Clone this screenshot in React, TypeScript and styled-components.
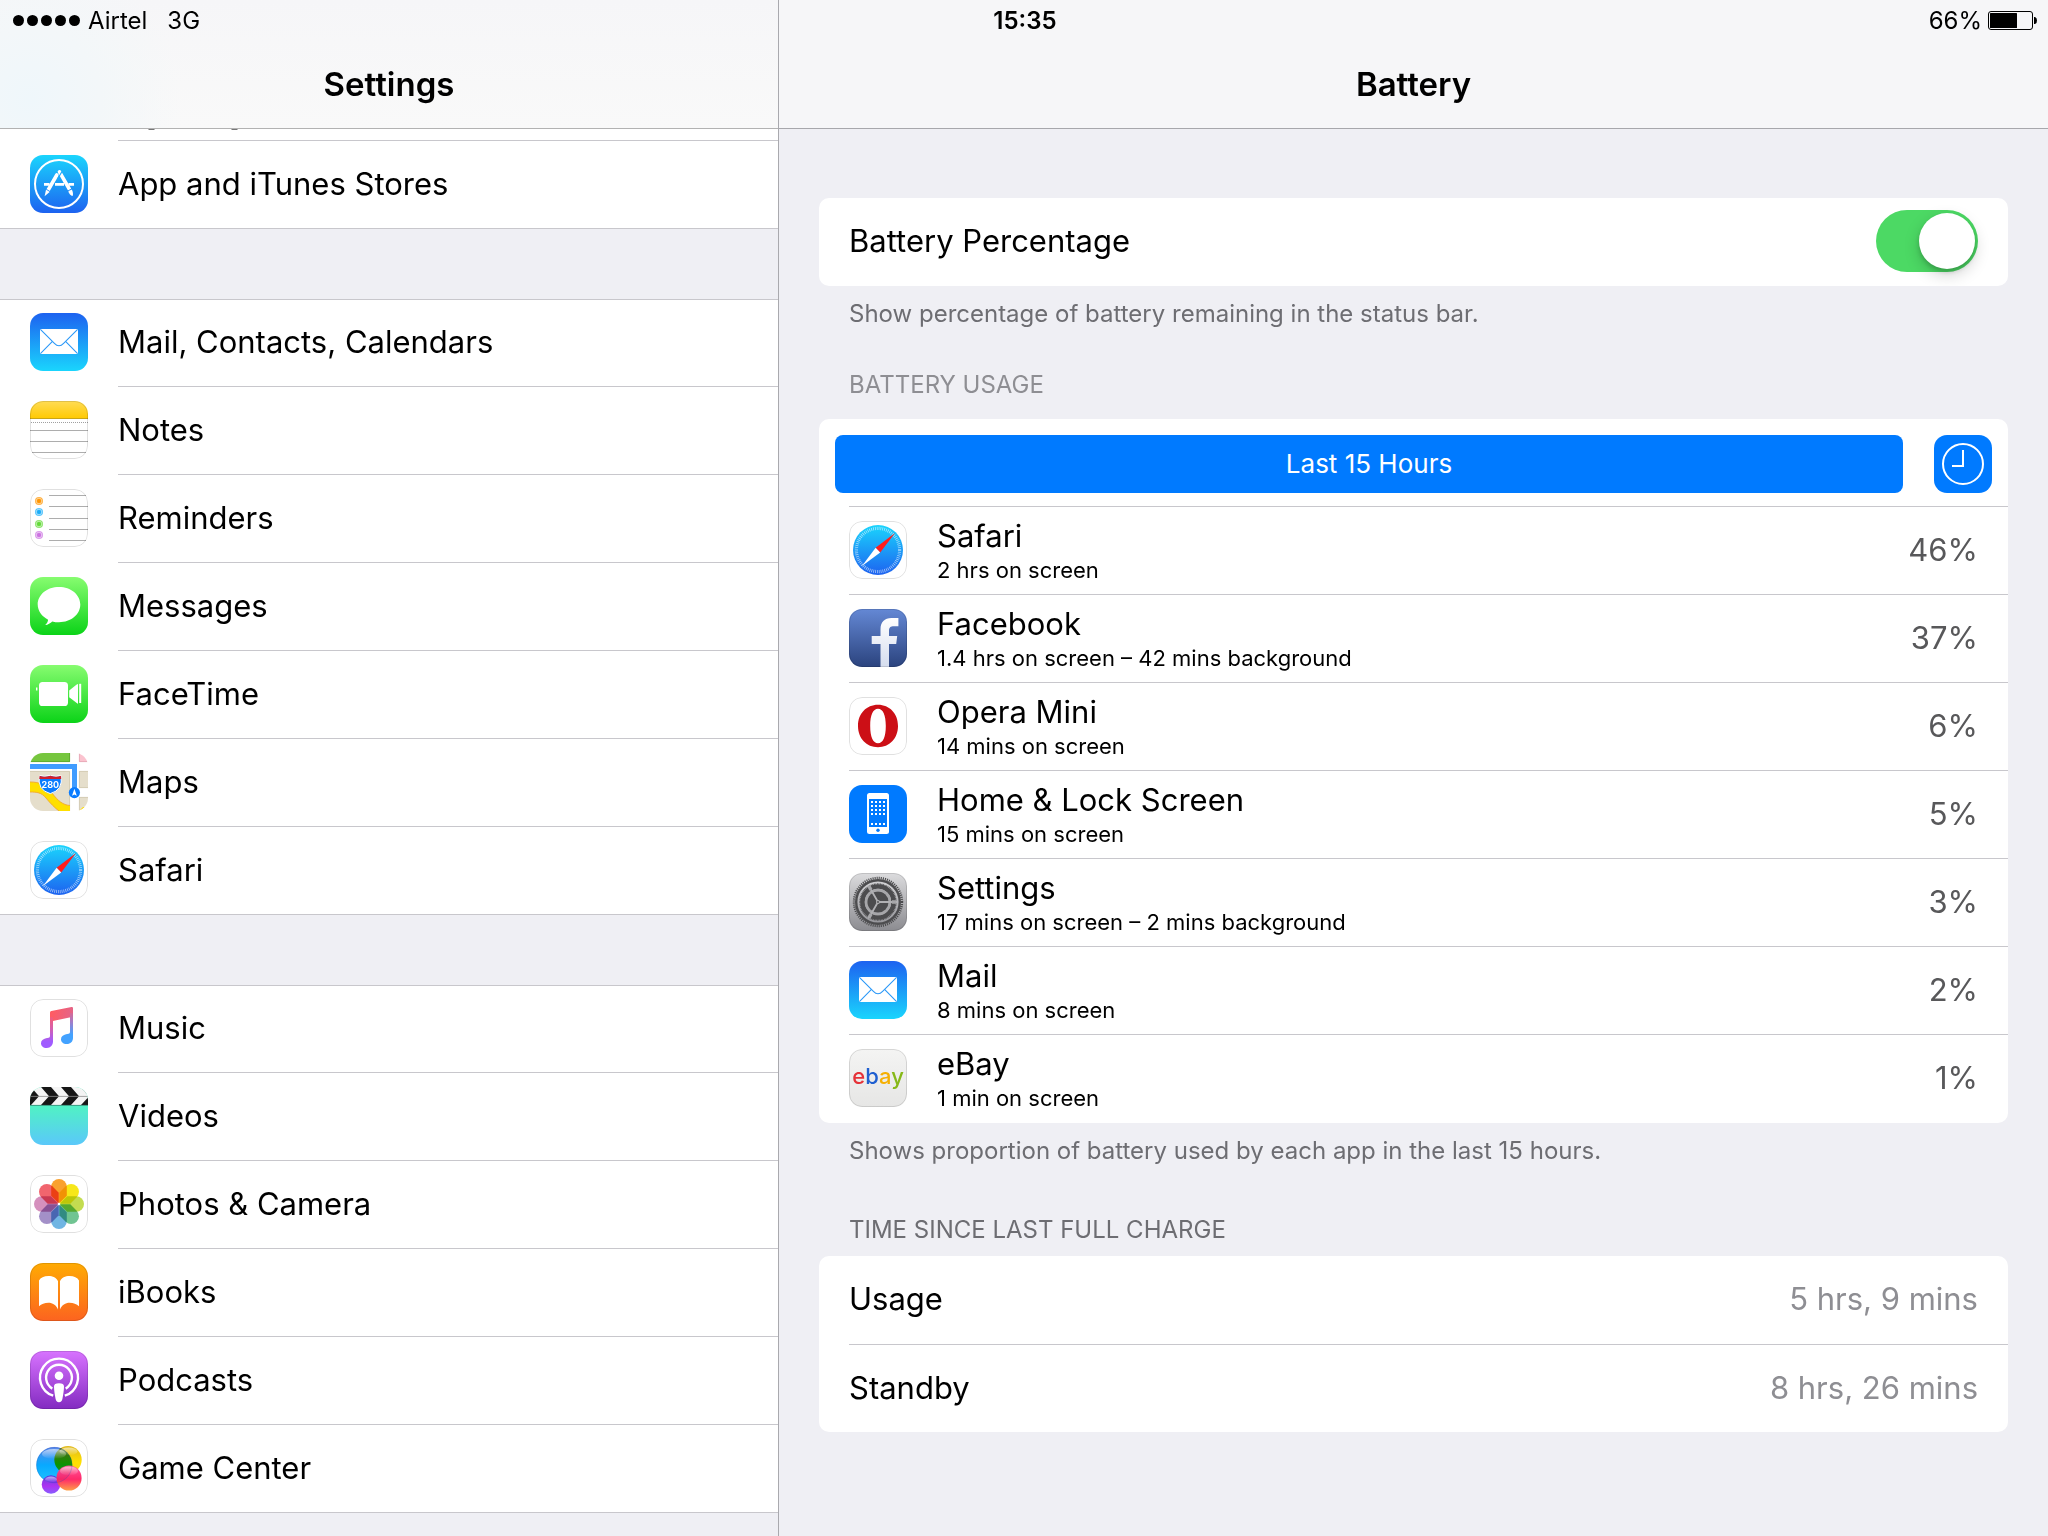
import React, { useState } from "react";
import styled, { createGlobalStyle } from "styled-components";

const color = {
  page: "#efeff4",
  card: "#ffffff",
  line: "#c8c7cc",
  blue: "#007aff",
  green: "#4cd964",
  note: "#6d6d72",
  value: "#8e8e93",
};

const GlobalStyle = createGlobalStyle`
  *, *::before, *::after { box-sizing: border-box; }
  body {
    margin: 0;
    background: ${color.page};
    color: #000;
    font-family: Inter, Roboto, "Liberation Sans", sans-serif;
    font-size: 31px;
    line-height: 40px;
  }
  button { font: inherit; border: 0; padding: 0; cursor: pointer; }
  ul, dl { list-style: none; margin: 0; padding: 0; }
  dt, dd, h1, h2, p { margin: 0; }
`;

/* ---------- Frame ---------- */

const Screen = styled.div`
  position: relative;
  display: flex;
  height: 100vh;
  min-height: 1100px;
  overflow: hidden;
`;

const StatusBar = styled.div`
  position: absolute;
  inset: 0 0 auto 0;
  z-index: 2;
  display: grid;
  grid-template-columns: 1fr auto 1fr;
  align-items: center;
  height: 41px;
  padding: 0 11px 0 13px;
  font-size: 24px;
  line-height: 41px;
`;

const Carrier = styled.div`
  display: flex;
  align-items: center;
  gap: 8px;
`;

const Network = styled.span`
  margin-left: 12px;
`;

const Signal = styled.span`
  display: flex;
  gap: 3px;
`;

const SignalDot = styled.i`
  width: 11px;
  height: 11px;
  border-radius: 50%;
  background: #000;
`;

const Clock = styled.time`
  font-weight: 600;
`;

const Charge = styled.div`
  display: flex;
  align-items: center;
  justify-content: flex-end;
  gap: 6px;
`;

const Sidebar = styled.aside`
  flex: 0 0 779px;
  border-right: 1px solid #a9a9ae;
`;

const Main = styled.main`
  flex: 1;
  min-width: 0;
`;

const TitleBar = styled.header<{ $tinted?: boolean }>`
  height: 129px;
  padding-top: 40px;
  border-bottom: 1px solid ${(p) => (p.$tinted ? "#b2b2b2" : "#a7a7ac")};
  background: ${(p) =>
    p.$tinted
      ? "radial-gradient(circle at 30px 100px, #eff7fb 0, #f3f7f9 70px, rgba(246,246,246,0) 150px), linear-gradient(#f6f6f8, #f9f9f9)"
      : "#f6f6f8"};
`;

const Title = styled.h1`
  font-size: 33px;
  font-weight: 600;
  line-height: 88px;
  text-align: center;
`;

/* ---------- Sidebar list ---------- */

const Strip = styled.div`
  background: ${color.card};
`;

const ScrolledRow = styled.div`
  height: 12px;
  margin-left: 118px;
  border-bottom: 1px solid ${color.line};
`;

const ScrolledText = styled.svg`
  display: block;
`;

const Group = styled.ul<{ $first?: boolean }>`
  margin-bottom: 70px;
  background: ${color.card};
  border-bottom: 1px solid ${color.line};
  box-shadow: ${(p) => (p.$first ? "none" : `inset 0 1px ${color.line}`)};
`;

const NavItem = styled.li`
  display: block;
  &:last-child a > span { border-bottom: 0; }
  &:last-child a { height: 87px; }
`;

const NavLink = styled.a`
  display: flex;
  gap: 30px;
  height: 88px;
  padding-left: 30px;
  color: inherit;
  text-decoration: none;
`;

const NavLabel = styled.span`
  flex: 1;
  padding-top: 23px;
  border-bottom: 1px solid ${color.line};
`;

/* ---------- App icons ---------- */

const Tile = styled.span<{ $fill?: string }>`
  flex: none;
  width: 58px;
  height: 58px;
  margin-top: 14px;
  border-radius: 13px;
  overflow: hidden;
  background: ${(p) => p.$fill || "#fff"};
`;

const Art = styled.svg`
  display: block;
  width: 58px;
  height: 58px;
`;

const HiddenDefs = styled.svg`
  position: absolute;
`;

/* ---------- Detail pane ---------- */

const Content = styled.div`
  padding: 69px 40px 40px;
`;

const Card = styled.section`
  border-radius: 10px;
  background: ${color.card};
  overflow: hidden;
`;

const Note = styled.p`
  padding: 12px 30px 0;
  color: ${color.note};
  font-size: 24px;
  line-height: 32px;
`;

const Heading = styled.h2<{ $light?: boolean }>`
  padding: ${(p) => (p.$light ? "39px 30px 18px" : "47px 30px 10px")};
  color: ${(p) => (p.$light ? color.value : color.note)};
  font-size: 24px;
  font-weight: 400;
  line-height: 32px;
  text-transform: uppercase;
`;

const SwitchRow = styled.label`
  display: flex;
  align-items: center;
  justify-content: space-between;
  height: 88px;
  padding: 0 30px 2px;
`;

const Switch = styled.input`
  appearance: none;
  display: flex;
  align-items: center;
  width: 102px;
  height: 62px;
  margin: 0;
  padding: 3px;
  border-radius: 31px;
  background: #e5e5ea;
  cursor: pointer;
  &::after {
    content: "";
    width: 56px;
    height: 56px;
    border-radius: 50%;
    background: #fff;
    box-shadow: 0 6px 16px rgba(0, 0, 0, 0.18), 0 3px 4px rgba(0, 0, 0, 0.16);
  }
  &:checked {
    justify-content: flex-end;
    background: ${color.green};
  }
`;

const RangeRow = styled.div`
  display: flex;
  gap: 31px;
  height: 87px;
  padding: 16px 16px 0;
`;

const RangeButton = styled.button`
  flex: 1;
  height: 58px;
  border-radius: 8px;
  background: ${color.blue};
  color: #fff;
  font-size: 26px;
`;

const ClockButton = styled.button`
  width: 58px;
  height: 58px;
  border-radius: 13px;
  background: ${color.blue};
`;

const UsageList = styled.ul`
  padding: 0 0 1px 30px;
`;

const UsageRow = styled.li`
  display: flex;
  height: 88px;
  padding-right: 30px;
  border-top: 1px solid ${color.line};
`;

const UsageText = styled.div`
  flex: 1;
  margin-left: 30px;
  padding-top: 9px;
`;

const UsageName = styled.div`
  line-height: 40px;
`;

const UsageDetail = styled.div`
  font-size: 22px;
  line-height: 28px;
`;

const Percent = styled.div`
  padding-top: 23px;
  color: #58585a;
`;

const Facts = styled.dl`
  padding-left: 30px;
`;

const Fact = styled.div`
  display: flex;
  justify-content: space-between;
  height: 88px;
  padding: 23px 30px 0 0;
  & + & { border-top: 1px solid ${color.line}; }
`;

const FactValue = styled.dd`
  color: ${color.value};
`;

/* ---------- Drawings ---------- */

const Outline = () => (
  <rect x=".5" y=".5" width="57" height="57" rx="12.5" fill="none" stroke="#000" strokeOpacity=".12" />
);

const SharedDefs = () => (
  <HiddenDefs width="0" height="0" aria-hidden="true">
    <defs>
      <linearGradient id="sky" x1="0" y1="0" x2="0" y2="1">
        <stop offset="0" stopColor="#1ad5fd" />
        <stop offset="1" stopColor="#1d62f0" />
      </linearGradient>
      <linearGradient id="noteTop" x1="0" y1="0" x2="0" y2="1">
        <stop offset="0" stopColor="#ffdc55" />
        <stop offset="1" stopColor="#ffc900" />
      </linearGradient>
      <linearGradient id="musicLeft" gradientUnits="userSpaceOnUse" x1="0" y1="14" x2="0" y2="46">
        <stop offset="0" stopColor="#ff5b63" />
        <stop offset=".45" stopColor="#d95fa8" />
        <stop offset=".9" stopColor="#a05bff" />
      </linearGradient>
      <linearGradient id="musicRight" gradientUnits="userSpaceOnUse" x1="0" y1="10" x2="0" y2="42">
        <stop offset="0" stopColor="#f0607c" />
        <stop offset=".4" stopColor="#a47cc8" />
        <stop offset=".8" stopColor="#43a2ff" />
      </linearGradient>
      <linearGradient id="musicBeam" gradientUnits="userSpaceOnUse" x1="22" y1="12" x2="43" y2="16">
        <stop offset="0" stopColor="#ff5b63" />
        <stop offset="1" stopColor="#e36489" />
      </linearGradient>
      <linearGradient id="ballBlue" x1="0" y1="0" x2="0" y2="1">
        <stop offset="0" stopColor="#5b86e8" />
        <stop offset=".5" stopColor="#08a9ff" />
        <stop offset="1" stopColor="#1fc4ff" />
      </linearGradient>
      <linearGradient id="ballYellow" x1="0" y1="0" x2="0" y2="1">
        <stop offset="0" stopColor="#dfb81e" />
        <stop offset=".6" stopColor="#ffe000" />
        <stop offset="1" stopColor="#ffd21f" />
      </linearGradient>
      <linearGradient id="ballPink" x1="0" y1="0" x2="0" y2="1">
        <stop offset="0" stopColor="#ff4f9a" />
        <stop offset=".55" stopColor="#ff1e62" />
        <stop offset="1" stopColor="#ff9a3c" />
      </linearGradient>
      <linearGradient id="ballPurple" x1="0" y1="0" x2="0" y2="1">
        <stop offset="0" stopColor="#5a2bd8" />
        <stop offset=".6" stopColor="#a51df0" />
        <stop offset="1" stopColor="#7a4dff" />
      </linearGradient>
      <linearGradient id="gloss" x1="0" y1="0" x2="0" y2="1">
        <stop offset="0" stopColor="#fff" stopOpacity=".6" />
        <stop offset="1" stopColor="#fff" stopOpacity="0" />
      </linearGradient>
      <linearGradient id="fLetter" x1="0" y1="0" x2="0" y2="1">
        <stop offset="0" stopColor="#fff" />
        <stop offset="1" stopColor="#d5ddee" />
      </linearGradient>
    </defs>
  </HiddenDefs>
);

const AppStoreArt = () => (
  <>
    <circle cx="29" cy="29" r="24" fill="none" stroke="#fff" strokeWidth="2" />
    <g stroke="#fff" fill="none">
      <path d="M14 29.3H19.5M25 29.3H34M38.5 29.3H44" strokeWidth="2.8" />
      <path d="M26.8 20L18.2 35" strokeWidth="3.6" strokeLinecap="round" />
      <path d="M29.5 16.8L39.3 34" strokeWidth="3.6" strokeLinecap="round" />
      <path d="M27.4 24.2L32 16.5" strokeWidth="1.2" stroke="#1ba9fb" />
    </g>
    <path d="M16 34.8L19.6 37L14.6 41.2Z" fill="#fff" />
    <path d="M38.2 36.4L41.8 34.4C43 37 43.4 39 42.6 41C40.6 40.4 39.2 38.6 38.2 36.4Z" fill="#fff" />
    <path d="M16.4 34.4L19.8 36.4M37.8 36L41.4 34" stroke="#1b86f6" strokeWidth=".9" />
  </>
);

const MailArt = () => (
  <>
    <rect x="10" y="16" width="38" height="25" rx=".8" fill="#fff" />
    <g fill="none" stroke="#2a98f8" strokeWidth="1.1">
      <path d="M10.4 16.4L24.4 30.4Q29 35.2 33.6 30.4L47.6 16.4" />
      <path d="M10.4 40.6L22.2 28.6M47.6 40.6L35.8 28.6" />
    </g>
  </>
);

const NotesArt = () => (
  <>
    <rect width="58" height="18" fill="url(#noteTop)" />
    <path d="M0 17.5H58" stroke="#c9a516" />
    <path d="M1 21.5H58" stroke="#a0a0a0" strokeDasharray="1 1" />
    <path d="M0 29.5H58M0 40.5H58M2 51.5H56" stroke="#adadad" />
    <Outline />
  </>
);

const bullets: [string, number][] = [
  ["#ff9500", 12],
  ["#1badf8", 23],
  ["#63da38", 35],
  ["#cc73e1", 46],
];

const RemindersArt = () => (
  <>
    <path d="M19 6.5H56M19 17.5H58M19 29.5H58M19 40.5H58M19 51.5H56" stroke="#adadad" />
    {bullets.map(([tint, y]) => (
      <g key={tint} fill={tint}>
        <circle cx="9" cy={y} r="4" fillOpacity=".75" />
        <circle cx="9" cy={y} r="2.8" fill="none" stroke="#fff" strokeOpacity=".6" strokeWidth=".7" />
        <circle cx="9" cy={y} r="2" />
      </g>
    ))}
    <Outline />
  </>
);

const MessagesArt = () => (
  <path
    fill="#fff"
    d="M29 10C41 10 50.3 17.8 50.3 27.6S41 45.3 29 45.3C26.6 45.3 24.4 45 22.3 44.4C20.3 46.2 18 47.7 15.2 48C17 46.4 18 44.4 18.1 42.7C11.8 39.6 7.7 34 7.7 27.6C7.7 17.8 17 10 29 10Z"
  />
);

const FaceTimeArt = () => (
  <g fill="#fff">
    <rect x="9" y="17" width="29" height="24" rx="3.6" />
    <path d="M6 22.4H7.4V25.6H6.6Q6 25.6 6 25Z" />
    <path d="M39.2 25.6L46.4 19.8Q48 18.6 48 19V38.6Q48 39 46.4 37.8L39.2 32.2Z" />
    <rect x="49.2" y="18.8" width="2" height="19.2" />
  </g>
);

const MapsArt = () => (
  <>
    <rect width="40" height="9" fill="#76c63e" />
    <path d="M0 8.6H39.6V0" fill="none" stroke="#5ba52c" strokeWidth=".8" />
    <rect x="49" width="9" height="9" fill="#fbc3cf" />
    <path d="M49.4 0V8.6H58" fill="none" stroke="#e2a4b2" strokeWidth=".8" />
    <rect y="18" width="40" height="40" fill="#e5decb" />
    <rect x="49" y="18" width="9" height="17" fill="#e5decb" />
    <rect x="49" y="44" width="9" height="14" fill="#e5decb" />
    <path d="M0 18.4H39.6V58M58 18.4H49.4V34.6H58M58 44.4H49.4V58" fill="none" stroke="#cfc6ae" strokeWidth=".8" />
    <path d="M0 29C10 29 16 32 22 40C28 48 33 52 40 52.5V58H29C25 55 20 50 16 45C11.5 39.5 7 39 0 39Z" fill="#ffdf00" />
    <path d="M0 29C10 29 16 32 22 40C28 48 33 52 40 52.5M29 58C25 55 20 50 16 45C11.5 39.5 7 39 0 39" fill="none" stroke="#f0a830" strokeWidth=".9" />
    <path d="M49 58L53 54H58V58Z" fill="#ffdf00" />
    <path d="M0 13.5H44.5V36" fill="none" stroke="#409cff" strokeWidth="5" />
    <circle cx="44.4" cy="39.6" r="5.6" fill="#0a7cff" />
    <path d="M44.4 35.8L46.8 42.8L44.4 41.4L42 42.8Z" fill="#fff" />
    <path d="M9.5 22.4Q14 24.4 20.3 22.4Q26.5 24.4 31 22.4Q33.6 37 20.3 40.6Q6.8 37 9.5 22.4Z" fill="#0a7cff" stroke="#fff" strokeWidth="1" />
    <path d="M9.6 22.8Q14 24.8 20.3 22.8Q26.5 24.8 31 22.8L31.2 26H9.2Z" fill="#d0202e" />
    <text x="20.3" y="34.8" fontSize="9" fontWeight="700" fill="#fff" textAnchor="middle">280</text>
  </>
);

const SafariArt = () => (
  <>
    <circle cx="29" cy="29" r="25" fill="url(#sky)" />
    <circle cx="29" cy="29" r="21.6" fill="none" stroke="#fff" strokeOpacity=".6" strokeWidth="3.2" strokeDasharray=".8 1.085" />
    <path d="M46 12L26.6 26.8L31.2 31.4Z" fill="#ff1d1d" />
    <path d="M13 45L26.6 26.8L31.2 31.4Z" fill="#fff" />
    <Outline />
  </>
);

const MusicArt = () => (
  <>
    <path d="M20 13.6Q20 12.3 21.4 12L41.5 8Q43 7.8 43 9V17.8L22.8 22L20 26Z" fill="url(#musicBeam)" />
    <path d="M20 18H23V42.5C23 46 20.6 49 16.8 49C13 49 11 46.8 11 44.2C11 41.4 13.2 39.8 16 39.2L18.6 38.8Q20 38.5 20 37Z" fill="url(#musicLeft)" />
    <path d="M40 14H43V39C43 42.4 40.6 45 36.8 45C33 45 31 42.8 31 40.2C31 37.4 33.2 35.8 36 35.2L38.6 34.8Q40 34.5 40 33Z" fill="url(#musicRight)" />
    <Outline />
  </>
);

const VideosArt = () => (
  <>
    <rect width="58" height="18" fill="#f4f4f4" />
    <g fill="#161616">
      <path d="M-9 0H1L9 9.2L1 18H-9Z" />
      <path d="M11 0H21L29 9.2L21 18H11L19 9.2Z" />
      <path d="M31 0H41L49 9.2L41 18H31L39 9.2Z" />
      <path d="M51 18L58 10.4V18Z" />
    </g>
    <path d="M0 9.4H58" stroke="#8b8b8b" strokeWidth=".8" />
    <path d="M0 18.4H58" stroke="#3a8f7c" strokeWidth=".9" />
    <path d="M52 2Q55 4 56.5 7" fill="none" stroke="#bbb" strokeWidth=".6" />
  </>
);

const petals = ["#f9a12e", "#f7e71a", "#c3dc50", "#70c492", "#70b5e3", "#a390c8", "#d590bd", "#f1656e"];

const Blend = styled.g`
  isolation: isolate;
`;

const Petal = styled.path`
  mix-blend-mode: multiply;
`;

const Overlap = styled.circle`
  mix-blend-mode: multiply;
`;

const PhotosArt = () => (
  <>
    <Blend>
      {petals.map((tint, i) => (
        <Petal
          key={tint}
          d="M-7.8 -17.2A7.8 7.8 0 0 1 7.8 -17.2V-8.2L0 -.4L-7.8 -8.2Z"
          fill={tint}
          transform={`translate(29 29) rotate(${i * 45})`}
        />
      ))}
    </Blend>
    <circle cx="29" cy="29" r="1.3" fill="#fff" />
    <Outline />
  </>
);

const BooksArt = () => (
  <>
    <g fill="#fff">
      <path d="M9 17.4C10.5 14.6 14 13 18.4 13S26.6 14.8 28 18.2V46.4C26 42 22.6 39.8 18.4 39.8C14.6 39.8 11.4 41 9 43.2Z" />
      <path d="M49 17.4C47.5 14.6 44 13 39.6 13S31.4 14.8 30 18.2V46.4C32 42 35.4 39.8 39.6 39.8C43.4 39.8 46.6 41 49 43.2Z" />
    </g>
    <Outline />
  </>
);

const PodcastsArt = () => (
  <>
    <g fill="none" stroke="#fff" strokeWidth="2.4">
      <path d="M23.2 44.7A19 19 0 1 1 34.8 44.7" />
      <path d="M22.3 37.6A12.9 12.9 0 1 1 35.7 37.6" />
    </g>
    <circle cx="29" cy="24.8" r="4.3" fill="#fff" />
    <path
      d="M29 32.2C32.4 32.2 34 33.2 34 35.6C34 39 33.2 44 32.5 47.5C32 50.2 31 51.2 29 51.2S26 50.2 25.5 47.5C24.8 44 24 39 24 35.6C24 33.2 25.6 32.2 29 32.2Z"
      fill="#fff"
    />
    <Outline />
  </>
);

const GameCenterArt = () => (
  <>
    <Blend>
      <circle cx="24.3" cy="26" r="18" fill="url(#ballBlue)" />
      <Overlap cx="38" cy="20.7" r="13.7" fill="url(#ballYellow)" />
      <circle cx="21" cy="45.5" r="9.3" fill="url(#ballPurple)" fillOpacity=".9" />
      <circle cx="39" cy="39" r="12.6" fill="url(#ballPink)" fillOpacity=".95" />
    </Blend>
    <ellipse cx="24" cy="15" rx="12" ry="5" fill="url(#gloss)" />
    <ellipse cx="38.5" cy="12.5" rx="9" ry="4" fill="url(#gloss)" />
    <ellipse cx="39" cy="32" rx="9" ry="4.5" fill="url(#gloss)" />
    <ellipse cx="21" cy="40.5" rx="6" ry="3" fill="url(#gloss)" />
    <circle cx="24.3" cy="26" r="17.7" fill="none" stroke="#2c4fb8" strokeOpacity=".4" strokeWidth=".6" />
    <Outline />
  </>
);

const FacebookArt = () => (
  <>
    <path
      d="M31.5 58V35H22.7V27H31.5V20.5C31.5 13 35.5 9 42.5 9H49.4V17.2H45C41.4 17.2 40 18.6 40 21.8V27H48.2L47.2 35H40V58Z"
      fill="url(#fLetter)"
    />
    <Outline />
  </>
);

const OperaArt = () => (
  <>
    <path
      fillRule="evenodd"
      fill="#cc0f16"
      d="M29 7.8C40.5 7.8 49 16.5 49 29S40.5 50.2 29 50.2S9 41.5 9 29S17.5 7.8 29 7.8ZM29 11.8C24 11.8 21.2 18 21.2 29S24 46.2 29 46.2S36.8 40 36.8 29S34 11.8 29 11.8Z"
    />
    <Outline />
  </>
);

const HomeArt = () => (
  <>
    <rect x="18" y="8" width="22" height="41" rx="2.5" fill="#fff" />
    <rect x="20" y="14" width="18" height="28" fill={color.blue} />
    {[16, 20, 24, 28, 38].map((y) =>
      [22, 26, 30, 34].map((x) => <rect key={`${x}-${y}`} x={x} y={y} width="2" height="2" fill="#fff" />)
    )}
    <circle cx="29" cy="45.3" r="1.7" fill={color.blue} />
  </>
);

const SettingsArt = () => (
  <>
    <circle cx="29" cy="29" r="24" fill="none" stroke="#4c4c4e" strokeWidth="2.4" strokeDasharray="1.1 .994" />
    <circle cx="29" cy="29" r="21.8" fill="none" stroke="#4c4c4e" strokeWidth="2.4" />
    <circle cx="29" cy="29" r="15.5" fill="none" stroke="#4c4c4e" strokeWidth="4.6" />
    <circle cx="29" cy="29" r="18" fill="none" stroke="#4c4c4e" strokeWidth="1.4" strokeDasharray=".9 .67" />
    <circle cx="29" cy="29" r="12" fill="none" stroke="#a6a6a9" strokeWidth="2.6" />
    <circle cx="29" cy="29" r="10.6" fill="#4c4c4e" />
    <path d="M29 29H48M29 29L19.5 12.5M29 29L19.5 45.5" stroke="#b0b0b3" strokeWidth="1.8" />
    <path d="M43 29H47M22 16.9L20 13.4M22 41.1L20 44.6" stroke="#a6a6a9" strokeWidth="3.4" />
    <circle cx="29" cy="29" r="2" fill="#b0b0b3" />
    <circle cx="29" cy="29" r=".9" fill="#4c4c4e" />
    <Outline />
  </>
);

const EbayArt = () => (
  <>
    <text x="29" y="35" fontSize="22" fontWeight="500" textAnchor="middle">
      <tspan fill="#e53238">e</tspan>
      <tspan fill="#1f5fd0">b</tspan>
      <tspan fill="#f5af02">a</tspan>
      <tspan fill="#86b817">y</tspan>
    </text>
    <Outline />
  </>
);

type IconName =
  | "appstore" | "mail" | "notes" | "reminders" | "messages" | "facetime" | "maps" | "safari"
  | "music" | "videos" | "photos" | "ibooks" | "podcasts" | "gamecenter"
  | "facebook" | "opera" | "home" | "settings" | "ebay";

const icons: Record<IconName, { art: () => React.ReactElement; fill?: string }> = {
  appstore: { art: AppStoreArt, fill: "linear-gradient(#1ad5fd, #1d62f0)" },
  mail: { art: MailArt, fill: "linear-gradient(#1d62f0, #1ad5fd)" },
  notes: { art: NotesArt },
  reminders: { art: RemindersArt },
  messages: { art: MessagesArt, fill: "linear-gradient(#87fc70, #0bd318)" },
  facetime: { art: FaceTimeArt, fill: "linear-gradient(#87fc70, #0bd318)" },
  maps: { art: MapsArt },
  safari: { art: SafariArt },
  music: { art: MusicArt },
  videos: { art: VideosArt, fill: "linear-gradient(#50f3c2 30%, #5ac8fa)" },
  photos: { art: PhotosArt },
  ibooks: { art: BooksArt, fill: "linear-gradient(#ffab03, #fc6320)" },
  podcasts: { art: PodcastsArt, fill: "linear-gradient(#d873ff, #832bc1)" },
  gamecenter: { art: GameCenterArt },
  facebook: { art: FacebookArt, fill: "linear-gradient(#6488d5, #2b437e)" },
  opera: { art: OperaArt },
  home: { art: HomeArt, fill: color.blue },
  settings: { art: SettingsArt, fill: "linear-gradient(#dcdcde, #8b8b90)" },
  ebay: { art: EbayArt, fill: "linear-gradient(#f4f4f3, #e6e6e5)" },
};

const AppIcon = ({ name }: { name: IconName }) => {
  const { art: Drawing, fill } = icons[name];
  return (
    <Tile $fill={fill} aria-hidden="true">
      <Art viewBox="0 0 58 58">
        <Drawing />
      </Art>
    </Tile>
  );
};

/* ---------- Data ---------- */

const groups: { icon: IconName; label: string }[][] = [
  [{ icon: "appstore", label: "App and iTunes Stores" }],
  [
    { icon: "mail", label: "Mail, Contacts, Calendars" },
    { icon: "notes", label: "Notes" },
    { icon: "reminders", label: "Reminders" },
    { icon: "messages", label: "Messages" },
    { icon: "facetime", label: "FaceTime" },
    { icon: "maps", label: "Maps" },
    { icon: "safari", label: "Safari" },
  ],
  [
    { icon: "music", label: "Music" },
    { icon: "videos", label: "Videos" },
    { icon: "photos", label: "Photos & Camera" },
    { icon: "ibooks", label: "iBooks" },
    { icon: "podcasts", label: "Podcasts" },
    { icon: "gamecenter", label: "Game Center" },
  ],
];

const usage: { icon: IconName; name: string; detail: string; percent: number }[] = [
  { icon: "safari", name: "Safari", detail: "2 hrs on screen", percent: 46 },
  { icon: "facebook", name: "Facebook", detail: "1.4 hrs on screen – 42 mins background", percent: 37 },
  { icon: "opera", name: "Opera Mini", detail: "14 mins on screen", percent: 6 },
  { icon: "home", name: "Home & Lock Screen", detail: "15 mins on screen", percent: 5 },
  { icon: "settings", name: "Settings", detail: "17 mins on screen – 2 mins background", percent: 3 },
  { icon: "mail", name: "Mail", detail: "8 mins on screen", percent: 2 },
  { icon: "ebay", name: "eBay", detail: "1 min on screen", percent: 1 },
];

const facts = [
  { label: "Usage", value: "5 hrs, 9 mins" },
  { label: "Standby", value: "8 hrs, 26 mins" },
];

/* ---------- Page ---------- */

export default function App() {
  const [showPercent, setShowPercent] = useState(true);

  return (
    <>
      <GlobalStyle />
      <SharedDefs />
      <Screen>
        <StatusBar>
          <Carrier>
            <Signal>
              {[0, 1, 2, 3, 4].map((i) => (
                <SignalDot key={i} />
              ))}
            </Signal>
            <span>Airtel</span>
            <Network>3G</Network>
          </Carrier>
          <Clock>15:35</Clock>
          <Charge>
            {showPercent && <span>66%</span>}
            <svg width="49" height="19" viewBox="0 0 49 19" aria-hidden="true">
              <rect x=".5" y=".5" width="44" height="18" rx="2.5" fill="none" stroke="#000" />
              <rect x="2" y="2" width="27" height="15" rx=".5" />
              <path d="M46 6H47Q49 6.5 49 9.5T47 13H46Z" />
            </svg>
          </Charge>
        </StatusBar>

        <Sidebar>
          <TitleBar $tinted>
            <Title>Settings</Title>
          </TitleBar>
          <Strip>
            <ScrolledRow>
              <ScrolledText width="130" height="1" viewBox="0 0 130 1" aria-hidden="true">
                <path d="M30 0H37L36 1H31ZM113 0H120L119 1H114Z" fill="#777" />
              </ScrolledText>
            </ScrolledRow>
          </Strip>
          <nav>
            {groups.map((items, i) => (
              <Group key={i} $first={i === 0}>
                {items.map((item) => (
                  <NavItem key={item.label}>
                    <NavLink href="#">
                      <AppIcon name={item.icon} />
                      <NavLabel>{item.label}</NavLabel>
                    </NavLink>
                  </NavItem>
                ))}
              </Group>
            ))}
          </nav>
        </Sidebar>

        <Main>
          <TitleBar>
            <Title>Battery</Title>
          </TitleBar>
          <Content>
            <Card>
              <SwitchRow>
                Battery Percentage
                <Switch
                  type="checkbox"
                  role="switch"
                  checked={showPercent}
                  onChange={(e) => setShowPercent(e.target.checked)}
                />
              </SwitchRow>
            </Card>
            <Note>Show percentage of battery remaining in the status bar.</Note>

            <Heading $light>Battery Usage</Heading>
            <Card>
              <RangeRow>
                <RangeButton type="button">Last 15 Hours</RangeButton>
                <ClockButton type="button" aria-label="Show activity time">
                  <Art viewBox="0 0 58 58">
                    <circle cx="29" cy="29" r="20" fill="none" stroke="#fff" strokeWidth="2" />
                    <path d="M29 15V31H18" fill="none" stroke="#fff" strokeWidth="2" />
                  </Art>
                </ClockButton>
              </RangeRow>
              <UsageList>
                {usage.map((app) => (
                  <UsageRow key={app.name}>
                    <AppIcon name={app.icon} />
                    <UsageText>
                      <UsageName>{app.name}</UsageName>
                      <UsageDetail>{app.detail}</UsageDetail>
                    </UsageText>
                    <Percent>{app.percent}%</Percent>
                  </UsageRow>
                ))}
              </UsageList>
            </Card>
            <Note>Shows proportion of battery used by each app in the last 15 hours.</Note>

            <Heading>Time Since Last Full Charge</Heading>
            <Card>
              <Facts>
                {facts.map((fact) => (
                  <Fact key={fact.label}>
                    <dt>{fact.label}</dt>
                    <FactValue>{fact.value}</FactValue>
                  </Fact>
                ))}
              </Facts>
            </Card>
          </Content>
        </Main>
      </Screen>
    </>
  );
}
